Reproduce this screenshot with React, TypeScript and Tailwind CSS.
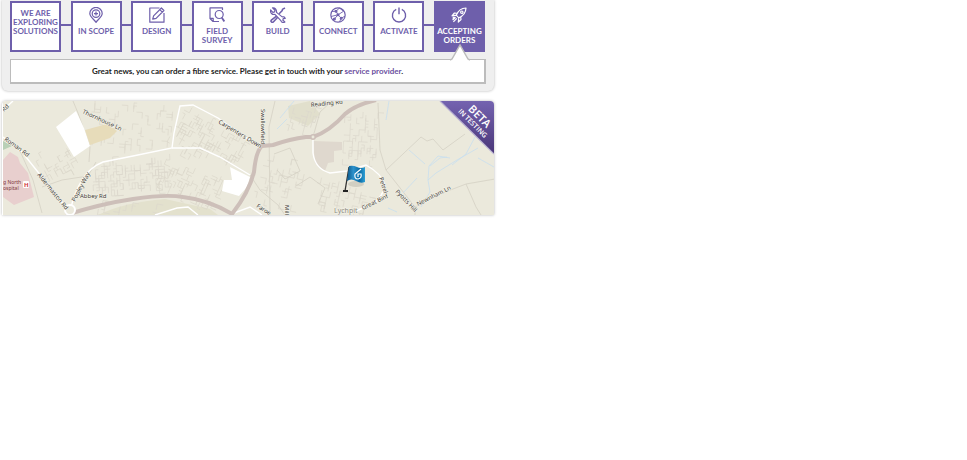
import type { ReactNode } from 'react'
import clsx from 'clsx'

interface Step {
  label: string
  icon?: ReactNode
  active?: boolean
}

const steps: Step[] = [
  { label: 'We are exploring solutions' },
  {
    label: 'In scope',
    icon: (
      <>
        <path d="M8 15.3C6 12.3 1.8 10 1.8 6.6a6.2 6.2 0 0 1 12.4 0C14.2 10 10 12.3 8 15.3z" />
        <circle cx="8" cy="6.6" r="3.8" />
        <path d="M8 4.6v4M6 6.6h4" />
      </>
    ),
  },
  {
    label: 'Design',
    icon: (
      <>
        <path d="M10.5 1H.8v14.2H15V6" />
        <path d="M3.7 12.2l.9-3.4L12.4 1l2.5 2.5-7.8 7.8zM10.8 2.6l2.5 2.5" />
      </>
    ),
  },
  {
    label: 'Field survey',
    icon: (
      <>
        <path d="M13.5 3V.9H1v10.6l3 3h6M1 11.3h3.2v3" />
        <circle cx="10.2" cy="7.5" r="4" />
        <path d="M12.7 10.6l2.6 3.8" strokeWidth="1.8" />
      </>
    ),
  },
  {
    label: 'Build',
    icon: (
      <>
        <path d="M2.5.9L5 3.2l-.4 1.7-1.7.4L.6 3c-.6 2.9 1.6 5 4.3 4.4l6 6.2c.5 2 2.6 2.4 4 1.4l-2-1.8.3-1.5 2-.2c-.6-1.7-2-2-3-1.6L6.5 5.4C6.8 2.4 5 .5 2.5.9z" />
        <path d="M15 1l-2.3 1.1-.6 1.7-3 3M6.5 9.2l-5.2 4c-1 1.4.8 2.8 2 1.8l4.4-4.7" strokeWidth="1.6" />
      </>
    ),
  },
  {
    label: 'Connect',
    icon: (
      <>
        <circle cx="8" cy="8" r="7.2" />
        <path d="M2 4.5l4-.3L9.5 1M6 4.2l2 3.6 5.5-3.5M8 7.8L1 9.5M8 7.8l3.2 3.4 3.8-2M11.2 11.2L9.5 15M3.5 13l4.5-5.2M9.5 1l4 3.3" strokeWidth=".9" />
        <circle cx="6" cy="4.2" r=".9" />
        <circle cx="8" cy="7.8" r=".9" />
        <circle cx="11.2" cy="11.2" r=".9" />
        <circle cx="4.4" cy="12" r=".9" />
      </>
    ),
  },
  {
    label: 'Activate',
    icon: <path d="M8 .6v6.6M5.2 2.4a6.6 6.6 0 1 0 5.6 0" strokeWidth="1.4" />,
  },
  {
    label: 'Accepting orders',
    active: true,
    icon: (
      <>
        <path d="M5.2 8.2C7 4 10 1.2 15 1c-.2 5-3 8-7.2 9.8zM6.2 6.3L3.4 6 1 8.8l4.2-.6M9.7 9.8l.3 2.8L7.3 15l.5-4.2" />
        <circle cx="10.8" cy="5.2" r="1.2" />
        <path d="M4.6 10.2L1.6 13M5.8 11.4l-3.4 3.4M3.4 9.8l-1.8 1.6" />
      </>
    ),
  },
]

// x, y, width, height, angle, number of streets
const estates = [
  [92, 103, 78, 44, 4, 50],
  [184, 110, 32, 36, 28, 44],
  [208, 122, 44, 28, 28, 44],
  [92, 164, 75, 30, -3, 90],
  [168, 156, 60, 32, 24, 60],
  [32, 160, 34, 30, -28, 24],
  [262, 156, 48, 44, 12, 30],
  [318, 180, 56, 24, 12, 36],
  [292, 104, 28, 22, 15, 16],
  [345, 114, 32, 46, 3, 44],
  [100, 200, 90, 12, 10, 18],
]

// short blocks with right-angled turns
function streets(seed: number, w: number, h: number, count: number) {
  let s = seed * 7919 + 13
  const rand = () => {
    s = (s * 16807) % 2147483647
    return s / 2147483647
  }
  rand()
  let d = ''
  for (let i = 0; i < count; i++) {
    const x = Math.round((rand() * w) / 3) * 3
    const y = Math.round((rand() * h) / 3) * 3
    const a = rand() > 0.5 ? 6 : 3
    const b = rand() > 0.5 ? 6 : -6
    d += rand() > 0.5 ? `M${x} ${y}h${a}v${b}` : `M${x} ${y}v${b}h${a}`
  }
  return d
}

const roads = [
  'M3 137L22 152L65 206',
  'M71 208Q74 193 82 180Q90 167 103 162L133 156L172 148L174 133L180 106L193 105L218 118L258 146',
  'M172 148L200 148L220 157L250 175',
  'M313 138V153Q315 169 330 173L347 171L366 165Q382 174 385 185Q382 201 366 207L350 213',
  'M3 110L13 101',
  'M155 215L177 208L188 207L198 215',
  'M234 213L250 207L262 215',
]

const lanes = [
  'M73 101L78 113L90 147L89 162',
  'M20 151L33 180L42 213',
  'M42 187L62 180L88 176L96 162',
  'M275 101L269 127L270 215',
  'M378 103L380 150L386 170L415 207V215',
  'M386 170L421 137L427 141L433 139L443 150L465 134',
  'M415 207L440 194L466 184L495 179',
  'M466 184L476 207L481 215',
  'M313 137L320 112L332 101',
  'M250 175L260 190L278 205L285 215',
  'M274 154L290 148L300 171L285 179L277 170',
  'M296 186L310 177L325 188L318 204',
]

const streams = [
  'M389 101L386 120',
  'M409 150L425 164M450 158L438 156L429 166L428 180L430 192L421 207',
  'M430 166L440 158L447 157M428 180L436 173L457 160L478 148',
  'M475 137L466 154L452 165',
  'M478 158L494 167M403 193L417 178M388 208L397 212',
  'M294 101L280 118M277 129L287 119',
]

const streetNames = [
  { x: 82, y: 113, angle: 25, text: 'Thornhouse Ln' },
  { x: 4, y: 140, angle: 36, text: 'Roman Rd' },
  { x: 37, y: 175, angle: 51, text: 'Aldermaston Rd' },
  { x: 75, y: 202, angle: -62, text: 'Popley Way' },
  { x: 80, y: 198, angle: 0, text: 'Abbey Rd' },
  { x: 218, y: 123, angle: 31, text: 'Carpenters Down' },
  { x: 261, y: 109, angle: 90, text: 'Swallowfield' },
  { x: 311, y: 107, angle: -6, text: 'Reading Rd' },
  { x: 256, y: 207, angle: 32, text: 'Faroe' },
  { x: 285, y: 205, angle: 90, text: 'Mill' },
  { x: 363, y: 210, angle: -26, text: 'Great Binf' },
  { x: 379, y: 178, angle: 72, text: 'Petrel' },
  { x: 395, y: 192, angle: 46, text: 'Pyotts Hill' },
  { x: 418, y: 206, angle: -27, text: 'Newnham Ln' },
  { x: 4, y: 112, angle: -45, text: 'Rd' },
]

function StepBox({ label, icon, active }: Step) {
  return (
    <li
      className={clsx(
        'relative flex h-[51px] w-[51px] shrink-0 flex-col items-center border-2 border-[#6e5fab] pt-1',
        active ? 'bg-[#6e5fab] text-white' : 'bg-white text-[#6e5fab]',
      )}
    >
      {icon && (
        <svg viewBox="0 0 16 16" className="size-4 shrink-0" fill="none" stroke="currentColor" strokeWidth="1.2" strokeLinejoin="round" aria-hidden="true">
          {icon}
        </svg>
      )}
      <span className={clsx('text-center text-[8px] leading-[9px] font-bold uppercase', icon ? 'mt-1' : 'mt-0.5')}>
        {label}
      </span>
    </li>
  )
}

function Progress() {
  return (
    <section className="rounded-b-md bg-[#efefef] px-2 pt-px pb-[7px] shadow-[0_0_3px_rgba(0,0,0,0.3)]">
      <div className="relative pr-px">
        <div className="absolute inset-x-2 top-[23px] h-0.5 bg-[#6e5fab]" />
        <ol className="relative flex justify-between">
          {steps.map((step) => (
            <StepBox key={step.label} {...step} />
          ))}
        </ol>
      </div>
      <div className="relative mt-[7px] border border-r-2 border-b-2 border-[#bcbcbc] bg-white">
        <svg viewBox="0 0 20 17" className="absolute right-3.5 bottom-full -mb-px h-[17px] w-5" aria-hidden="true">
          <path d="M0 17L10 1L20 17z" fill="#fff" />
          <path d="M0 16L2 15L10 1L18 15L20 16" fill="none" stroke="#bcbcbc" strokeWidth="1.5" />
        </svg>
        <p className="py-1 text-center text-[8px] leading-[14px] font-bold text-[#222]">
          Great news, you can order a fibre service. Please get in touch with your{' '}
          <a href="#providers" className="text-[#6b4fa0]">service provider</a>.
        </p>
      </div>
    </section>
  )
}

function CoverageMap() {
  return (
    <section className="overflow-hidden rounded-t-sm pl-px shadow-[0_0_3px_rgba(0,0,0,0.3)]">
      <svg viewBox="3 101 491 114" className="block w-full bg-[#ebe9dc]" fontFamily="'Noto Sans', sans-serif" role="img" aria-label="Coverage map">
        <defs>
          <linearGradient id="ribbon" x1="0" y1="0" x2="0" y2="1">
            <stop offset="0" stopColor="#7463b0" />
            <stop offset="1" stopColor="#493577" />
          </linearGradient>
          <linearGradient id="flag" x1="0" y1="0" x2="1" y2="0">
            <stop offset="0" stopColor="#0b5688" />
            <stop offset=".35" stopColor="#2d91cb" />
            <stop offset=".7" stopColor="#096ba5" />
            <stop offset="1" stopColor="#2e9fd5" />
          </linearGradient>
        </defs>

        {/* land use */}
        <path d="M313 141L342 142V150L334 151V162L328 163L325 171L315 163z" fill="#dfd8ce" />
        <path d="M288 106L310 101L320 114L308 126L289 118z" fill="#e1dfcc" />
        <path d="M98 215Q125 202 165 199L210 209L218 215z" fill="#e3e1cd" />

        <g fill="none" stroke="#dcd8cc" strokeWidth=".7">
          {estates.map(([x, y, w, h, angle, count], i) => (
            <path key={i} d={streets(i + 1, w, h, count)} transform={`translate(${x} ${y}) rotate(${angle})`} />
          ))}
        </g>
        <g fill="none" stroke="#d4d0c4" strokeWidth=".8">
          {lanes.map((d) => <path key={d} d={d} />)}
        </g>
        <path d="M76 111L84 128L90 146L74 157L56 127z" fill="#fff" />
        <path d="M85 130L107 124L117 131L110 138L90 145z" fill="#e7dcba" />
        <path d="M3 160L10 152L18 157L20 163L28 173L34 197L14 205L3 197z" fill="#e8cfce" />
        <path d="M3 141L12 146L3 150z" fill="#b9d0b6" />
        <g fill="none" stroke="#c8deef" strokeWidth=".8">
          {streams.map((d) => <path key={d} d={d} />)}
        </g>
        <g fill="none" stroke="#fff" strokeWidth="1.4">
          {roads.map((d) => <path key={d} d={d} />)}
        </g>
        <path d="M230 167L250 177L247 187L239 196L222 191L224 180L232 180z" fill="#fff" />
        <g fill="none" stroke="#cdbfb9" strokeWidth="4">
          <path d="M66 215Q100 204 133 199T183 197Q209 200 232 214C243 200 250 188 254 172Q256 151 262 146L273 145Q290 139 306 137L313 137Q330 131 345 114Q355 105 376 100" />
        </g>
        <circle cx="313" cy="137" r="2.2" fill="#ebe9dc" stroke="#cdbfb9" strokeWidth="1.5" />
        <circle cx="70" cy="210" r="5" fill="#ebe9dc" stroke="#fff" strokeWidth="2" />

        <g fontSize="6" fill="#3d3a36" stroke="#f5f4ea" strokeWidth="1" paintOrder="stroke">
          {streetNames.map(({ x, y, angle, text }) => (
            <text key={text} transform={`translate(${x} ${y}) rotate(${angle})`}>{text}</text>
          ))}
        </g>
        <g fontSize="5" fill="#80393d">
          <text x="3" y="184">g North</text>
          <text x="3" y="190">ospital</text>
        </g>
        <rect x="23" y="181" width="6" height="7" rx="1" fill="#fff" />
        <text x="24" y="187" fontSize="6" fontWeight="700" fill="#d03238">H</text>
        <text x="334" y="213" fontSize="7" fill="#8b887e" stroke="#f5f4ea" strokeWidth="1" paintOrder="stroke">Lychpit</text>

        {/* marker */}
        <ellipse cx="356" cy="184" rx="8" ry="3" fill="#aaa79c" opacity=".4" />
        <path d="M349 167L345 191" stroke="#333" strokeWidth="1.3" />
        <path d="M343 191h5" stroke="#222" strokeWidth="2" />
        <path d="M349 166Q353 165 357 167T365 167V182Q361 184 356 181T347 181z" fill="url(#flag)" />
        <path d="M361 169L355 174Q354 179 358 179Q362 178 361 174H358V177" fill="none" stroke="#fff" strokeWidth="1.2" />

        {/* ribbon */}
        <path d="M440 101H494V154z" fill="url(#ribbon)" />
        <path d="M440 101L494 154" stroke="#b9b1d2" strokeWidth="1.2" />
        <g fill="#fff" textAnchor="middle" fontFamily="'Open Sans', sans-serif">
          <text transform="translate(477 119) rotate(45)" fontSize="11" fontWeight="600">BETA</text>
          <text transform="translate(471 125) rotate(45)" fontSize="7" fontWeight="600">IN TESTING</text>
        </g>
      </svg>
    </section>
  )
}

export default function App() {
  return (
    <main className="min-h-screen bg-white font-['Lato',sans-serif]">
      <div className="flex max-w-[494px] flex-col gap-2.5 pl-0.5">
        <Progress />
        <CoverageMap />
      </div>
    </main>
  )
}
